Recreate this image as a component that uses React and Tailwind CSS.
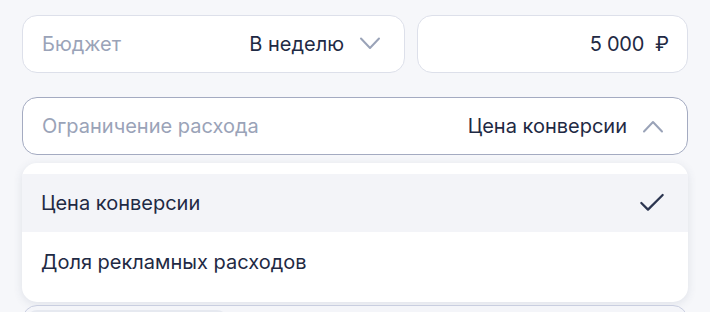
import { Check } from "lucide-react";

function Chevron({ up }) {
  return (
    <svg width="24" height="14" viewBox="0 0 24 14" fill="none" className="shrink-0">
      <path
        d={up ? "M3 12.5 L12 3 L21 12.5" : "M3 1.5 L12 11 L21 1.5"}
        stroke="#9aa3b8"
        strokeWidth="2"
        strokeLinecap="round"
        strokeLinejoin="round"
      />
    </svg>
  );
}

export default function App() {
  return (
    <div
      className="w-[710px] h-[312px] overflow-hidden bg-[#f6f7fa] px-[22px] pt-[15px]"
      style={{ fontFamily: "Inter, 'Noto Sans', sans-serif" }}
    >
      <div className="flex gap-[12px]">
        <div className="flex items-center h-[58px] w-[383px] rounded-[15px] border border-[#dde0ea] bg-white pl-[19px] pr-[22px]">
          <span className="text-[20px] text-[#9aa3b8]">Бюджет</span>
          <span className="ml-auto text-[20px] text-[#1f2a44]">В неделю</span>
          <span className="ml-[14px]"><Chevron /></span>
        </div>
        <div className="flex items-center justify-end h-[58px] flex-1 rounded-[15px] border border-[#dde0ea] bg-white pr-[18px]">
          <span className="text-[20px] tracking-[-0.3px] text-[#1f2a44]">5 000</span>
          <span className="ml-[11px] text-[20px] text-[#1f2a44]">₽</span>
        </div>
      </div>

      <div className="mt-[24px] flex items-center h-[58px] rounded-[15px] border border-[#a4abc1] bg-white pl-[19px] pr-[22px]">
        <span className="text-[20px] text-[#9aa3b8]">Ограничение расхода</span>
        <span className="ml-auto text-[20px] text-[#1f2a44]">Цена конверсии</span>
        <span className="ml-[14px]"><Chevron up /></span>
      </div>

      <div className="mt-[8px] rounded-[15px] bg-white py-[11px] shadow-[0_2px_10px_rgba(60,70,110,0.12)]">
        <div className="flex items-center h-[58px] bg-[#f3f4f8] pl-[19px] pr-[20px]">
          <span className="text-[20px] text-[#1f2a44]">Цена конверсии</span>
          <Check size={32} strokeWidth={1.7} className="ml-auto text-[#2b3550]" />
        </div>
        <div className="flex items-center h-[59px] pl-[19px]">
          <span className="text-[20px] text-[#1f2a44]">Доля рекламных расходов</span>
        </div>
      </div>

      <div className="mt-[3px] h-[40px] rounded-[15px] border border-[#c9cee0] bg-[#f4f5f9] p-[4px]">
        <div className="h-[30px] w-[200px] rounded-[10px] bg-[#e6e9f0]" />
      </div>
    </div>
  );
}
